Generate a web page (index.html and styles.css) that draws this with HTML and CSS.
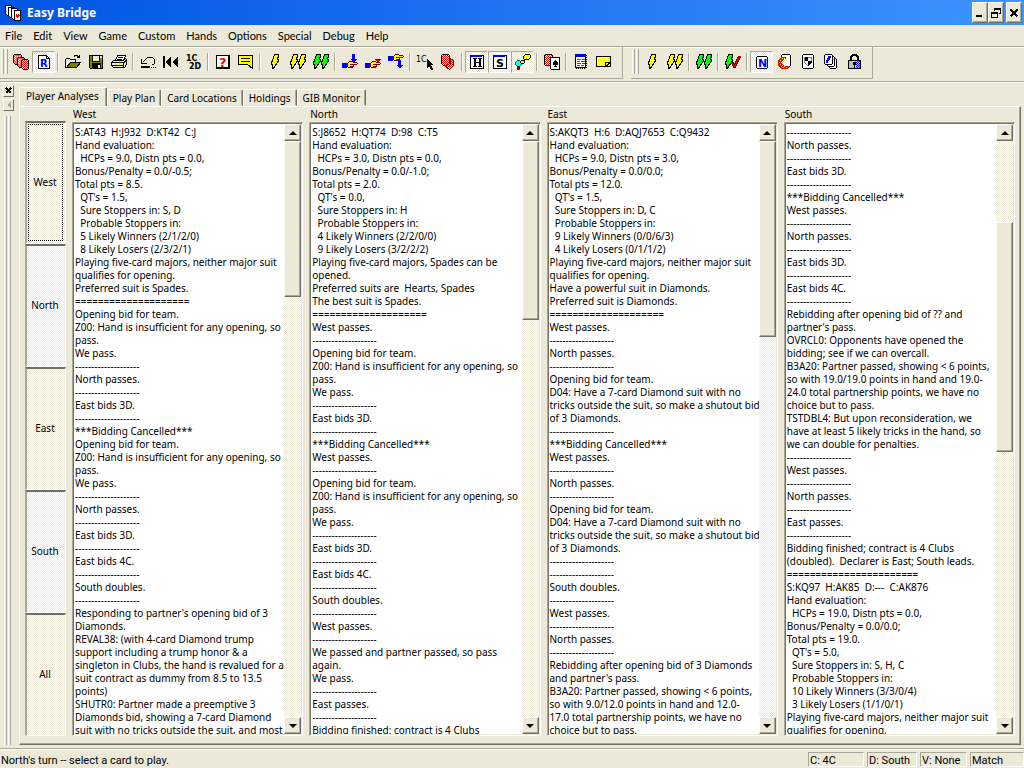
FILE: index.html
```html
<!DOCTYPE html>
<html lang="en">
<head>
<meta charset="utf-8">
<title>Easy Bridge</title>
<link rel="stylesheet" href="styles.css">
</head>
<body>
<svg class="defs" width="0" height="0" aria-hidden="true">
  <defs>
    <pattern id="redcheck" width="2" height="2" patternUnits="userSpaceOnUse"><rect width="2" height="2" fill="#fff"/><path fill="#f00" d="M0 0h1v1h-1zM1 1h1v1h-1z"/></pattern>
    <pattern id="redcheckalt" width="2" height="2" patternUnits="userSpaceOnUse"><rect width="2" height="2" fill="#fff"/><path fill="#f00" d="M1 0h1v1h-1zM0 1h1v1h-1z"/></pattern>
    <pattern id="yelcheck" width="2" height="2" patternUnits="userSpaceOnUse"><rect width="2" height="2" fill="#fff"/><path fill="#ff0" d="M0 0h1v1h-1zM1 1h1v1h-1z"/></pattern>
    <pattern id="orgcheck" width="2" height="2" patternUnits="userSpaceOnUse"><rect width="2" height="2" fill="#ff0"/><path fill="#f00" d="M0 0h1v1h-1zM1 1h1v1h-1z"/></pattern>
    <pattern id="blucheck" width="2" height="2" patternUnits="userSpaceOnUse"><rect width="2" height="2" fill="#c0c0c0"/><path fill="#00f" d="M0 0h1v1h-1zM1 1h1v1h-1z"/></pattern>
    <symbol id="bolt" viewBox="0 0 8 16"><path stroke="#000" d="M3.500.500h4v2l-1 2h0v1h1v1l-1 2-1 1-1 2-1 1-1 2-1 0V10.500h-1v-2l1-2 1-3z"/></symbol>
    <symbol id="hand" viewBox="0 0 16 8"><path fill="#00f" d="M0 2h5v5h-5z"/><path fill="#ff0" stroke="#800000" d="M5.500 2.500l2-2h3l1 1h3l1 1-1 1h-3v2l-1 1h-4l-1-1z"/><path stroke="#800000" d="M8 3.500h5M8 5.500h3"/></symbol>
    <symbol id="lettercard" viewBox="0 0 16 16"><path fill="#fff" stroke="#000" d="M1.500 1.500h13v13h-13z"/><path fill="#00f" d="M1 1h12v2H1z"/></symbol>
  </defs>
</svg>
<div class="app">
  <header class="titlebar">
    <svg class="logo" viewBox="0 0 16 16"><g fill="#fff" stroke="#000"><path d="M.500.500h6v10h-4l-2-2z"/><path d="M3.500 2.500h6v10h-4l-2-2z"/><path d="M6.500 3.500h6v11h-4l-2-2z"/><path d="M9.500 5.500h6v10h-6z"/></g><path fill="#f00" d="M11 9h1v1h1V9h1v1h1v1h-1v1h-1v1h-1v-1h-1z"/></svg>
    <h1>Easy Bridge</h1>
    <div class="winbtns">
      <button aria-label="Minimize"><svg viewBox="0 0 10 10"><path fill="#000" d="M1 7h6v2H1z"/></svg></button>
      <button aria-label="Restore"><svg viewBox="0 0 10 10"><path fill="#000" d="M3 0h7v6H8V5h1V2H4v1H3zM0 4h7v6H0zM1 6v3h5V6z"/></svg></button>
      <button class="close" aria-label="Close"><svg viewBox="0 0 10 10"><path d="M1.500 1.500l7 7M8.500 1.500l-7 7" stroke="#000" stroke-width="2"/></svg></button>
    </div>
  </header>
  <nav class="menu">
    <button>File</button><button>Edit</button><button>View</button><button>Game</button><button>Custom</button><button>Hands</button><button>Options</button><button>Special</button><button>Debug</button><button>Help</button>
  </nav>
  <div class="toolbars">
    <div class="toolbar" role="toolbar">
      <i class="grip"></i>
      <button class="tool" aria-label="Deal"><svg viewBox="0 0 16 16"><path fill="#f66" stroke="#000" d="M.500 1.500l1-1h6l1 1v9h-6l-2-2z"/><path fill="#fff" d="M2 2h1v1H2zM1 3h1v1H1zM2 4h1v1H2zM1 5h1v1H1zM2 6h1v1H2zM4 2h1v1H4zM6 2h1v1H6z"/><path fill="#f66" stroke="#000" d="M4.500 4.500l1-1h5l1 1v9h-5l-2-2z"/><path fill="#fff" d="M6 5h1v1H6zM5 6h1v1H5zM6 7h1v1H6zM5 8h1v1H5zM6 9h1v1H6zM8 5h1v1H8z"/><path fill="url(#redcheckalt)" stroke="#000" d="M8.500 6.500l1-1h5l1 1v8l-1 1h-4l-2-2z"/></svg></button>
      <button class="tool on" aria-label="Rubber"><svg viewBox="0 0 16 16"><path fill="#fff" stroke="#000" d="M2.500 1.500h8l3 3v10h-11z"/><path fill="none" stroke="#000" d="M10.500 1.500v3h3"/><text x="4" y="13" class="blue g10">R</text></svg></button>
      <i class="sep"></i>
      <button class="tool" aria-label="Open"><svg viewBox="0 0 16 16"><path fill="url(#yelcheck)" stroke="#000" d="M.500 13.500v-8l1-1h3l1 1h5v3h-5l-4 5"/><path fill="#808000" stroke="#000" d="M1.500 13.500l4-5h10l-4 5z"/><path fill="none" stroke="#000" d="M9 2.500l1-1h2l2 2M14.500 1v3M12 3.500h2"/></svg></button>
      <button class="tool" aria-label="Save"><svg viewBox="0 0 16 16"><path fill="#808000" stroke="#000" d="M1.500 1.500h13v13h-12l-1-1z"/><path fill="#ece9d8" stroke="#000" d="M4.500 1.500h7v6h-7z"/><path d="M4 9h9v5H4z"/><path fill="#ece9d8" d="M10 11h2v3h-2zM12 2h2v2h-2z"/></svg></button>
      <button class="tool" aria-label="Print"><svg viewBox="0 0 16 16"><path fill="#fff" stroke="#000" d="M4.500 6.500l2-5h8l-2 5"/><path stroke="#000" d="M7 3.500h5M6 5.500h5"/><path fill="#ece9d8" stroke="#000" d="M.500 8.500l2-2h10l2-2 1 1v5l-2 3h-11l-2-2z"/><path fill="none" stroke="#000" d="M1 8.500h11v5M1 11.500h11M13 8.500l2-2"/><path fill="#ff0" d="M7 9h4v2H7z"/></svg></button>
      <i class="sep"></i>
      <button class="tool" aria-label="Undo"><svg viewBox="0 0 16 16"><path fill="none" stroke="#000" d="M3 8l4-4 2-1h3l2 2 1 2-1 3-2 1"/><path d="M1 5h1v4h5v1H1zM1 12h9v2H1zM11 13h1v1h-1zM13 13h1v1h-1zM15 13h1v1h-1z"/></svg></button>
      <button class="tool" aria-label="Restart"><svg viewBox="0 0 16 16"><path d="M0 2h2v12H0zM8 2v12L2 8zM15 2v12L9 8z"/></svg></button>
      <button class="tool" aria-label="Auction"><svg viewBox="0 0 16 16"><text x="0" y="7" class="g8">1C</text><text x="3" y="15" class="g8">2D</text></svg></button>
      <i class="sep"></i>
      <button class="tool" aria-label="Hint"><svg viewBox="0 0 16 16"><path fill="#fff" stroke="#000" d="M1.500 1.500h13v13h-13z"/><path fill="#000" d="M1 13h14v2H1zM13 2h2v13h-2z"/><text x="4" y="13" class="red g13">?</text></svg></button>
      <button class="tool" aria-label="Comments"><svg viewBox="0 0 16 16"><path fill="#ff0" stroke="#000" d="M.500 1.500h14v13l-5-4h-9z"/><path stroke="#000" d="M3 4.500h9M3 7.500h9"/></svg></button>
      <i class="sep"></i>
      <button class="tool yellow" aria-label="Auto play card"><svg viewBox="0 0 16 16"><use href="#bolt" x="4" width="8" height="16"/></svg></button>
      <button class="tool yellow" aria-label="Auto play trick"><svg viewBox="0 0 16 16"><use href="#bolt" width="8" height="16"/><use href="#bolt" x="8" width="8" height="16"/></svg></button>
      <button class="tool green" aria-label="Auto play all"><svg viewBox="0 0 16 16"><use href="#bolt" width="8" height="16"/><use href="#bolt" x="8" width="8" height="16"/></svg></button>
      <i class="sep"></i>
      <button class="tool" aria-label="Play hand"><svg viewBox="0 0 16 16"><use href="#hand" y="7" width="16" height="8"/><path fill="#00f" d="M10 0h3v5h2l-3 4-4-4h2z"/></svg></button>
      <button class="tool" aria-label="Next trick"><svg viewBox="0 0 16 16"><use href="#hand" y="7" width="16" height="8"/><path fill="#800000" d="M9 5h7l-3 4z"/><path fill="#f00" d="M11 6h3v1h-3z"/></svg></button>
      <button class="tool" aria-label="Pass hand"><svg viewBox="0 0 16 16"><use href="#hand" width="16" height="8"/><path fill="#00f" d="M10 6h3v5h2l-3 4-4-4h2z"/></svg></button>
      <i class="sep"></i>
      <button class="tool" aria-label="Select bid"><svg viewBox="0 0 16 16"><text x="-1" y="8" class="g8 plain">1C</text><path d="M10 5v9l2-2 2 4h1l1-1-2-4h2z"/></svg></button>
      <button class="tool" aria-label="Shuffle"><svg viewBox="0 0 16 16"><path fill="url(#redcheck)" stroke="#000" d="M1.500 1.500l1-1h6l1 1v8l-1 2h-5l-2-2z"/><path fill="url(#orgcheck)" stroke="#800000" d="M5.500 11.500l5-2v-5l3 2v5l-4 4-4-3z"/></svg></button>
      <i class="sep"></i>
      <button class="tool on" aria-label="Hands"><svg viewBox="0 0 16 16"><use href="#lettercard" width="16" height="16"/><path d="M4 4h4v1H7v3h3V5H9V4h4v1h-1v7h1v1H9v-1h1V9H7v3h1v1H4v-1h1V5H4z"/></svg></button>
      <button class="tool on" aria-label="Suits"><svg viewBox="0 0 16 16"><use href="#lettercard" width="16" height="16"/><text x="4" y="13" class="g12">S</text></svg></button>
      <button class="tool on" aria-label="Show analysis"><svg viewBox="0 0 16 16"><path fill="#0ff" stroke="#008080" d="M.500 8.500l2-2h2l2 2v2l-2 2h-2l-2-2z"/><path fill="#800000" d="M2 12h3v4H2z"/><path fill="#ff0" stroke="#000" d="M8.500 2.500l2-2h4l1 1v2l-2 2h-4l-1-1zM5.500 8.500v-1l1-1h3v2l-1 1h-2z"/></svg></button>
      <i class="sep"></i>
      <button class="tool" aria-label="Show cards"><svg viewBox="0 0 16 16"><path fill="url(#redcheck)" stroke="#000" d="M.500 1.500l1-1h6l1 1v9l-1 1h-6l-1-1z"/><path fill="#fff" stroke="#000" d="M6.500 3.500h9v12h-8l-1-1z"/><path d="M11 6h1l2 3v2h-2v1h1v1h-3v-1h1v-1H9V9z"/></svg></button>
      <i class="sep"></i>
      <button class="tool" aria-label="Score sheet"><svg viewBox="0 0 16 16"><path fill="#fff" stroke="#000" d="M2.500.500h10v13h-10z"/><path fill="#00f" d="M2 0h11v3H2z"/><path stroke="#f00" d="M4 5.500h4m1 0h3M4 7.500h3m1 0h4M4 9.500h4m1 0h3M4 11.500h3m1 0h3"/><path stroke="#000" stroke-dasharray="1" d="M13.500 1v14M3 14.500h10"/></svg></button>
      <button class="tool" aria-label="Notes"><svg viewBox="0 0 16 16"><path fill="url(#yelcheck)" stroke="#000" d="M.500 2.500h14v10H.500z"/><path fill="#ff0" stroke="#000" d="M9.500 12.500v-4h5z"/></svg></button>
    </div>
    <div class="toolbar" role="toolbar">
      <i class="grip"></i>
      <button class="tool yellow" aria-label="Play one"><svg viewBox="0 0 16 16"><use href="#bolt" x="4" width="8" height="16"/></svg></button>
      <button class="tool yellow" aria-label="Play round"><svg viewBox="0 0 16 16"><use href="#bolt" width="8" height="16"/><use href="#bolt" x="8" width="8" height="16"/></svg></button>
      <i class="sep"></i>
      <button class="tool green" aria-label="Play out"><svg viewBox="0 0 16 16"><use href="#bolt" width="8" height="16"/><use href="#bolt" x="8" width="8" height="16"/></svg></button>
      <i class="sep"></i>
      <button class="tool green" aria-label="Finish"><svg viewBox="0 0 16 16"><use href="#bolt" width="8" height="16"/><path fill="#f00" stroke="#800000" d="M6.500 8.500l2 0 1 2 4-8h2l-5 11h-2z"/></svg></button>
      <i class="sep"></i>
      <button class="tool on" aria-label="North"><svg viewBox="0 0 16 16"><path fill="#fff" stroke="#000" d="M2.500 3.500l1-1h9l1 1v10l-1 1h-9l-1-1z"/><text x="4" y="13" class="blue g12">N</text></svg></button>
      <button class="tool" aria-label="Rotate"><svg viewBox="0 0 16 16"><path fill="#fff" stroke="#000" d="M4.500 1.500l1-1h7l1 1v10l-1 1h-7l-1-1z"/><path fill="#f00" d="M5 3h4v2H7L5 7v3l2 2h5v2l-2 1H5l-3-2-1-3V7l1-2z"/><path fill="#ff0" d="M5 4h1v1H5zM3 6h1v1H3zM2 8h1v1H2zM4 8h1v1H4zM3 10h1v1H3zM5 11h1v1H5zM4 12h1v1H4zM7 12h1v1H7zM6 13h1v1H6zM9 13h1v1H9zM7 4h1v1H7z"/></svg></button>
      <button class="tool" aria-label="Vulnerability"><svg viewBox="0 0 16 16"><path fill="#fff" stroke="#000" d="M2.500 1.500l1-1h9l1 1v12l-1 1h-9l-1-1z"/><path fill="#fff" stroke="#808080" d="M4.500 3.500h7v5l-3 3h-1l-3-3z"/><path d="M5 3h3v4H5zM8 7h4v2l-4 3z"/></svg></button>
      <button class="tool" aria-label="Boards"><svg viewBox="0 0 16 16"><g fill="#fff" stroke="#000"><path d="M6.500 5.500l1-1h5l1 1v8l-1 1h-5l-2-2z"/><path d="M4.500 3.500l1-1h5l1 1v8l-1 1h-5l-2-2z"/><path d="M1.500 1.500l1-1h6l1 1v8l-1 1h-6l-1-1z"/></g><path fill="#00f" d="M5 2h3v2H7v2H6v1H5v2H3V6h1V4h1z"/></svg></button>
      <button class="tool" aria-label="Lock"><svg viewBox="0 0 16 16"><path fill="none" stroke="#000" stroke-width="2" d="M5 6V3l2-2h3l2 2v3"/><path fill="#c0c0c0" stroke="#000" d="M2.500 6.500h12v8h-12z"/><path fill="url(#blucheck)" d="M10 7h4v7h-4z"/><path d="M7 8h3v3H9v3H8v-3H7z"/></svg></button>
    </div>
  </div>
  <div class="work">
    <aside class="dock">
      <button class="mini" aria-label="Close panel"><svg viewBox="0 0 8 8"><path d="M1 1l5 5M6 1l-5 5" stroke="#000" stroke-width="2"/></svg></button>
      <button class="mini" aria-label="Collapse panel"><svg viewBox="0 0 8 8"><path fill="#aca899" d="M6 0v8L2 4z"/></svg></button>
      <i class="grip"></i>
    </aside>
    <main class="tabbed">
      <div class="tabs" role="tablist">
        <button class="tab active" role="tab" aria-selected="true">Player Analyses</button><button class="tab" role="tab">Play Plan</button><button class="tab" role="tab">Card Locations</button><button class="tab" role="tab">Holdings</button><button class="tab" role="tab">GIB Monitor</button>
      </div>
      <div class="pane">
        <div class="seats">
          <button class="seat focus">West</button><button class="seat">North</button><button class="seat">East</button><button class="seat">South</button><button class="seat">All</button>
        </div>
        <section class="player">
          <label for="west">West</label>
          <div class="box">
<textarea id="west" readonly>S:AT43  H:J932  D:KT42  C:J
Hand evaluation:
  HCPs = 9.0, Distn pts = 0.0,
Bonus/Penalty = 0.0/-0.5;
Total pts = 8.5.
  QT's = 1.5,
  Sure Stoppers in: S, D
  Probable Stoppers in:
  5 Likely Winners (2/1/2/0)
  8 Likely Losers (2/3/2/1)
Playing five-card majors, neither major suit
qualifies for opening.
Preferred suit is Spades.
====================
Opening bid for team.
Z00: Hand is insufficient for any opening, so
pass.
We pass.
--------------------
North passes.
--------------------
East bids 3D.
--------------------
***Bidding Cancelled***
Opening bid for team.
Z00: Hand is insufficient for any opening, so
pass.
We pass.
--------------------
North passes.
--------------------
East bids 3D.
--------------------
East bids 4C.
--------------------
South doubles.
--------------------
Responding to partner's opening bid of 3
Diamonds.
REVAL38: (with 4-card Diamond trump
support including a trump honor &amp; a
singleton in Clubs, the hand is revalued for a
suit contract as dummy from 8.5 to 13.5
points)
SHUTR0: Partner made a preemptive 3
Diamonds bid, showing a 7-card Diamond
suit with no tricks outside the suit, and most</textarea>
            <div class="scroll"><button class="up" aria-label="Scroll up"></button><div class="track"><div class="thumb" style="height:27%"></div></div><button class="down" aria-label="Scroll down"></button></div>
          </div>
        </section>
        <section class="player">
          <label for="north">North</label>
          <div class="box">
<textarea id="north" readonly>S:J8652  H:QT74  D:98  C:T5
Hand evaluation:
  HCPs = 3.0, Distn pts = 0.0,
Bonus/Penalty = 0.0/-1.0;
Total pts = 2.0.
  QT's = 0.0,
  Sure Stoppers in: H
  Probable Stoppers in:
  4 Likely Winners (2/2/0/0)
  9 Likely Losers (3/2/2/2)
Playing five-card majors, Spades can be
opened.
Preferred suits are  Hearts, Spades
The best suit is Spades.
====================
West passes.
--------------------
Opening bid for team.
Z00: Hand is insufficient for any opening, so
pass.
We pass.
--------------------
East bids 3D.
--------------------
***Bidding Cancelled***
West passes.
--------------------
Opening bid for team.
Z00: Hand is insufficient for any opening, so
pass.
We pass.
--------------------
East bids 3D.
--------------------
East bids 4C.
--------------------
South doubles.
--------------------
West passes.
--------------------
We passed and partner passed, so pass
again.
We pass.
--------------------
East passes.
--------------------
Bidding finished; contract is 4 Clubs</textarea>
            <div class="scroll"><button class="up" aria-label="Scroll up"></button><div class="track"><div class="thumb" style="height:31%"></div></div><button class="down" aria-label="Scroll down"></button></div>
          </div>
        </section>
        <section class="player">
          <label for="east">East</label>
          <div class="box">
<textarea id="east" readonly>S:AKQT3  H:6  D:AQJ7653  C:Q9432
Hand evaluation:
  HCPs = 9.0, Distn pts = 3.0,
Bonus/Penalty = 0.0/0.0;
Total pts = 12.0.
  QT's = 1.5,
  Sure Stoppers in: D, C
  Probable Stoppers in:
  9 Likely Winners (0/0/6/3)
  4 Likely Losers (0/1/1/2)
Playing five-card majors, neither major suit
qualifies for opening.
Have a powerful suit in Diamonds.
Preferred suit is Diamonds.
====================
West passes.
--------------------
North passes.
--------------------
Opening bid for team.
D04: Have a 7-card Diamond suit with no
tricks outside the suit, so make a shutout bid
of 3 Diamonds.
--------------------
***Bidding Cancelled***
West passes.
--------------------
North passes.
--------------------
Opening bid for team.
D04: Have a 7-card Diamond suit with no
tricks outside the suit, so make a shutout bid
of 3 Diamonds.
--------------------
--------------------
South doubles.
--------------------
West passes.
--------------------
North passes.
--------------------
Rebidding after opening bid of 3 Diamonds
and partner's pass.
B3A20: Partner passed, showing &lt; 6 points,
so with 9.0/12.0 points in hand and 12.0-
17.0 total partnership points, we have no
choice but to pass.</textarea>
            <div class="scroll"><button class="up" aria-label="Scroll up"></button><div class="track"><div class="thumb" style="height:34%"></div></div><button class="down" aria-label="Scroll down"></button></div>
          </div>
        </section>
        <section class="player">
          <label for="south">South</label>
          <div class="box">
<textarea id="south" readonly>--------------------
North passes.
--------------------
East bids 3D.
--------------------
***Bidding Cancelled***
West passes.
--------------------
North passes.
--------------------
East bids 3D.
--------------------
East bids 4C.
--------------------
Rebidding after opening bid of ?? and
partner's pass.
OVRCL0: Opponents have opened the
bidding; see if we can overcall.
B3A20: Partner passed, showing &lt; 6 points,
so with 19.0/19.0 points in hand and 19.0-
24.0 total partnership points, we have no
choice but to pass.
TSTDBL4: But upon reconsideration, we
have at least 5 likely tricks in the hand, so
we can double for penalties.
--------------------
West passes.
--------------------
North passes.
--------------------
East passes.
--------------------
Bidding finished; contract is 4 Clubs
(doubled).  Declarer is East; South leads.
=======================
S:KQ97  H:AK85  D:---  C:AK876
Hand evaluation:
  HCPs = 19.0, Distn pts = 0.0,
Bonus/Penalty = 0.0/0.0;
Total pts = 19.0.
  QT's = 5.0,
  Sure Stoppers in: S, H, C
  Probable Stoppers in:
  10 Likely Winners (3/3/0/4)
  3 Likely Losers (1/1/0/1)
Playing five-card majors, neither major suit
qualifies for opening.</textarea>
            <div class="scroll"><button class="up" aria-label="Scroll up"></button><div class="track"><div class="before" style="height:14%"></div><div class="thumb" style="height:40%"></div></div><button class="down" aria-label="Scroll down"></button></div>
          </div>
        </section>
      </div>
    </main>
  </div>
  <footer class="status">
    <span class="message">North's turn -- select a card to play.</span>
    <span class="cell contract">C: 4C</span><span class="cell dealer">D: South</span><span class="cell vul">V: None</span><span class="cell mode">Match</span>
  </footer>
</div>
</body>
</html>
```
FILE: styles.css
```css
* { box-sizing: border-box; }
html, body { height: 100%; margin: 0; }
body {
  background: #ece9d8;
  color: #000;
  font: 10px/13px "Noto Sans", "Liberation Sans", sans-serif;
  overflow: hidden;
}
button, textarea { font: inherit; color: inherit; margin: 0; padding: 0; border: 0; border-radius: 0; background: none; }
svg { display: block; shape-rendering: crispEdges; }
.defs { position: absolute; }
.app { display: flex; flex-direction: column; height: 100vh; }

/* title bar */
.titlebar {
  display: flex; align-items: center; height: 25px; flex: none;
  padding: 0 2px 0 5px;
  background: linear-gradient(to right, #0054e3, #3d95ff);
}
.logo { width: 16px; height: 16px; margin-right: 6px; }
h1 { flex: 1; margin: 0; color: #fff; font: bold 12px/16px "Noto Sans", sans-serif; }
.winbtns { display: flex; }
.winbtns button {
  display: grid; place-items: center; width: 16px; height: 21px;
  background: #ece9d8; border: 1px solid; border-color: #fff #716f64 #716f64 #fff;
  box-shadow: inset -1px -1px #aca899;
}
.winbtns svg { width: 10px; height: 10px; }
.winbtns .close { margin-left: 2px; }

/* menu */
.menu { display: flex; gap: 11px; height: 21px; flex: none; padding-left: 5px; align-items: center; font: 11px/13px Lato, sans-serif; }

/* toolbars */
.toolbars {
  display: flex; gap: 8px; height: 36px; flex: none;
  border-top: 1px solid #aca899; border-bottom: 1px solid #aca899;
  box-shadow: inset 0 1px #fff, 0 1px #fff;
}
.toolbar {
  display: flex; align-items: center; height: 32px; padding: 0 7px 2px 1px;
  border-right: 1px solid #aca899; border-bottom: 1px solid #aca899;
  box-shadow: inset 0 1px #fff;
}
.grip {
  width: 8px; height: 25px; flex: none;
  background: linear-gradient(to right, #fff 1px, #ece9d8 1px 2px, #aca899 2px 3px, #ece9d8 3px 4px, #fff 4px 5px, #ece9d8 5px 6px, #aca899 6px 7px, #ece9d8 7px);
}
.tool { display: grid; place-items: center; width: 23px; height: 22px; flex: none; }
.tool svg { width: 16px; height: 16px; overflow: visible; }
.tool text { font-family: "DejaVu Sans", sans-serif; font-weight: bold; }
.tool text.plain { font-weight: normal; }
.g8 { font-size: 8px; }
.g10 { font-size: 10px; }
.g12 { font-size: 11px; }
.g13 { font-size: 13px; }
.blue { fill: #00f; }
.red { fill: #f00; }
.yellow { fill: #ff0; }
.green { fill: #0f0; }
.on, .seat, .scroll {
  background: repeating-conic-gradient(#fff 0 25%, #ece9d8 0 50%) 0 0 / 2px 2px;
}
.on { border: 1px solid; border-color: #aca899 #fff #fff #aca899; }
.sep { width: 2px; height: 18px; margin: 0 2px; flex: none; background: linear-gradient(to right, #aca899 1px, #fff 1px); }

/* work area */
.work { display: flex; flex: 1; min-height: 0; padding: 2px 3px 3px 0; }
.dock { display: flex; flex-direction: column; width: 19px; flex: none; padding: 1px 0 0 3px; gap: 2px; }
.dock .grip { flex: 1; height: auto; margin: 3px 0 0 1px; }
.mini {
  display: grid; place-items: center; width: 11px; height: 12px;
  border: 1px solid; border-color: #fff #716f64 #716f64 #fff;
}
.mini svg { width: 8px; height: 8px; }
.tabbed { display: flex; flex-direction: column; flex: 1; min-width: 0; padding-top: 3px; }
.tabs { display: flex; align-items: flex-end; height: 19px; flex: none; }
.tab {
  height: 17px; padding: 1px 5px 0; white-space: nowrap;
  border: 1px solid; border-color: #fff #716f64 transparent #fff;
  border-radius: 2px 2px 0 0;
  box-shadow: inset -1px 0 #aca899;
}
.tab.active { height: 20px; padding: 0 7px 2px 6px; margin-bottom: -1px; background: #ece9d8; border-bottom: 0; }
.pane {
  display: flex; flex: 1; min-height: 0; gap: 6px; padding: 0 5px 8px;
  border: 1px solid; border-color: #fff #716f64 #716f64 #fff;
  box-shadow: inset -1px -1px #aca899;
}
.seats { display: flex; flex-direction: column; width: 41px; flex: none; padding-top: 14px; }
.seat { flex: 1; border: 2px solid; border-color: #716f64 #fff #fff #aca899; border-width: 2px 1px 1px 2px; padding: 0 2px 2px 0; }
.focus { outline: 1px dotted #000; outline-offset: -4px; }
.player { display: flex; flex-direction: column; flex: 1; min-width: 0; }
.player label { height: 15px; padding: 1px 0 0 1px; flex: none; }
.box {
  display: flex; flex: 1; min-height: 0; background: #fff;
  border: 1px solid; border-color: #aca899 #fff #fff #aca899;
  box-shadow: inset 1px 1px #716f64, inset -1px -1px #ece9d8;
  padding: 1px;
}
textarea {
  flex: 1; min-width: 0; padding: 2px 0 0 1px; resize: none; outline: 0;
  overflow: hidden; white-space: pre;
}
.scroll { display: flex; flex-direction: column; width: 17px; flex: none; }
.up, .down, .thumb {
  background: #ece9d8; border: 1px solid; border-color: #fff #716f64 #716f64 #fff;
  box-shadow: inset -1px -1px #aca899;
}
.up, .down { display: grid; place-items: center; height: 17px; flex: none; }
.up::before, .down::before { content: ""; border: 4px solid transparent; }
.up::before { border-top: 0; border-bottom-color: #000; }
.down::before { border-bottom: 0; border-top-color: #000; }
.track { flex: 1; min-height: 0; }

/* status bar */
.status {
  display: flex; gap: 3px; height: 20px; flex: none; padding: 3px 0 1px 1px;
  border-top: 1px solid #aca899; box-shadow: inset 0 1px #fff;
  font-family: Roboto, sans-serif; font-size: 11px;
  line-height: 17px; white-space: nowrap;
}
.message { flex: 1; }
.cell { padding-left: 1px; border: 1px solid; border-color: #aca899 #fff #fff #aca899; line-height: 15px; }
.contract { width: 56px; }
.dealer { width: 50px; }
.vul { width: 47px; }
.mode { width: 54px; }
```
